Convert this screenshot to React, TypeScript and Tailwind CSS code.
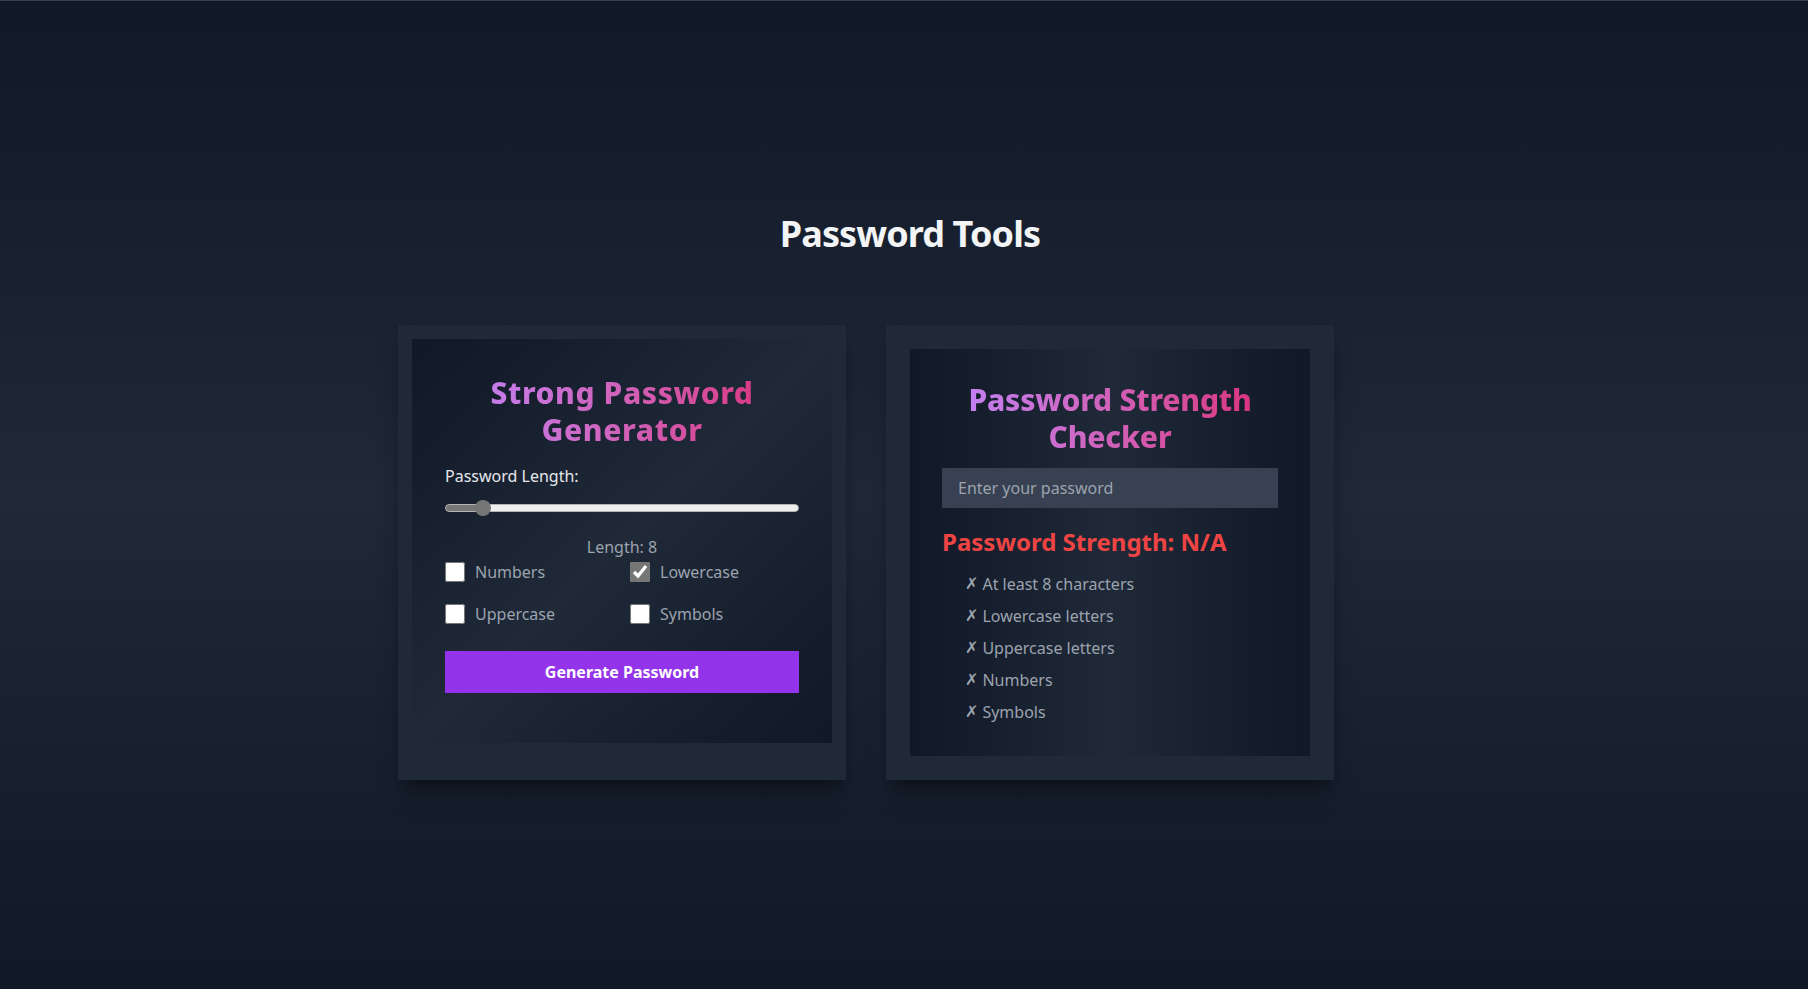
import { useState } from 'react'

function Generator() {
  const [length, setLength] = useState(8)
  const [opts, setOpts] = useState({ numbers: false, lowercase: true, uppercase: false, symbols: false })
  const min = 4
  const max = 50
  const pct = ((length - min) / (max - min)) * 100

  const toggle = (k: keyof typeof opts) => setOpts({ ...opts, [k]: !opts[k] })

  return (
    <div className="bg-linear-to-br from-[#111827] via-[#1f2937] to-[#111827] px-[33px] pt-[35px] pb-[50px]">
      <h2 className="bg-linear-to-r from-[#c084fc] to-[#db2777] bg-clip-text text-center text-[30px] leading-[37px] font-extrabold tracking-[0.6px] text-transparent">
        Strong Password
        <br />
        Generator
      </h2>
      <p className="mt-4 text-base text-[#e5e7eb]">Password Length:</p>
      <input
        type="range"
        min={min}
        max={max}
        value={length}
        onChange={(e) => setLength(Number(e.target.value))}
        className="mt-4 block h-2 w-full cursor-pointer appearance-none rounded-full border border-[#b5b5b5] [&::-webkit-slider-thumb]:h-4 [&::-webkit-slider-thumb]:w-4 [&::-webkit-slider-thumb]:appearance-none [&::-webkit-slider-thumb]:rounded-full [&::-webkit-slider-thumb]:bg-[#767676]"
        style={{ background: `linear-gradient(to right, #767676 0%, #767676 ${pct}%, #efefef ${pct}%, #efefef 100%)` }}
      />
      <p className="mt-[23px] text-center text-base text-[#9ca3af]">Length: {length}</p>
      <div className="mt-[1px] grid grid-cols-2 gap-x-4 gap-y-[18px]">
        {([
          ['numbers', 'Numbers'],
          ['lowercase', 'Lowercase'],
          ['uppercase', 'Uppercase'],
          ['symbols', 'Symbols'],
        ] as const).map(([k, label]) => (
          <label key={k} className="flex items-center gap-2.5 text-base text-[#9ca3af]">
            <input
              type="checkbox"
              checked={opts[k]}
              onChange={() => toggle(k)}
              className="h-5 w-5 accent-[#767676]"
            />
            {label}
          </label>
        ))}
      </div>
      <button className="mt-[25px] h-[42px] w-full bg-[#9333ea] text-base font-bold text-white">
        Generate Password
      </button>
    </div>
  )
}

function Checker() {
  const [pw, setPw] = useState('')
  const rules = ['At least 8 characters', 'Lowercase letters', 'Uppercase letters', 'Numbers', 'Symbols']

  return (
    <div className="bg-linear-to-r from-[#111827] via-[#1f2937] to-[#111827] px-8 pt-[32px] pb-8">
      <h2 className="bg-linear-to-r from-[#c084fc] to-[#db2777] bg-clip-text text-center text-[30px] leading-[37px] font-extrabold tracking-[-0.2px] text-transparent">
        Password Strength
        <br />
        Checker
      </h2>
      <input
        type="password"
        value={pw}
        onChange={(e) => setPw(e.target.value)}
        placeholder="Enter your password"
        className="mt-[13px] block h-10 w-full bg-[#374151] px-4 text-base text-white placeholder-[#9ca3af] outline-none"
      />
      <p className="mt-[18px] text-2xl font-bold text-[#ef4444]">Password Strength: N/A</p>
      <ul className="mt-[14px] space-y-2 pl-[23px] text-base text-[#9ca3af]">
        {rules.map((r) => (
          <li key={r} className="flex h-6 items-center gap-1">
            <span className="font-['DejaVu_Sans',sans-serif] leading-none">✗</span>
            <span>{r}</span>
          </li>
        ))}
      </ul>
    </div>
  )
}

export default function App() {
  return (
    <div className="min-h-screen w-full border-t border-[#3b3e44] bg-linear-to-b from-[#111827] via-[#1f2937] to-[#111827] font-['Noto_Sans',sans-serif]">
      <h1 className="pt-[213px] pl-3 text-center text-4xl font-bold tracking-tight text-[#f3f4f6]">Password Tools</h1>
      <div className="mt-[71px] flex items-stretch justify-center gap-10 pr-[76px]">
        <div className="w-[448px] bg-[#1f2937] p-[14px] shadow-xl shadow-black/30">
          <Generator />
        </div>
        <div className="w-[448px] bg-[#1f2937] p-6 shadow-xl shadow-black/30">
          <Checker />
        </div>
      </div>
    </div>
  )
}
